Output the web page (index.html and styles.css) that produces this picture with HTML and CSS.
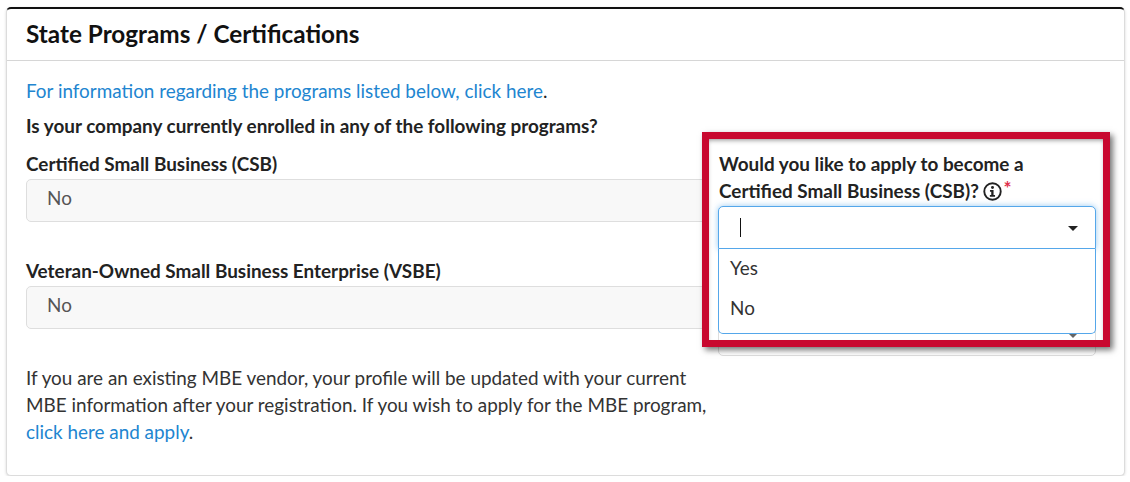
FILE: index.html
```html
<!DOCTYPE html>
<html lang="en">
<head>
<meta charset="utf-8">
<title>State Programs / Certifications</title>
<link rel="stylesheet" href="styles.css">
</head>
<body>
<section class="card">
  <h2 class="card-title">State Programs / Certifications</h2>
  <div class="card-body">
    <p class="intro"><a href="#">For information regarding the programs listed below, click here</a>.</p>
    <p class="question">Is your company currently enrolled in any of the following programs?</p>
    <div class="columns">
      <div class="left">
        <label class="label">Certified Small Business (CSB)</label>
        <div class="readonly">No</div>
        <label class="label label-second">Veteran-Owned Small Business Enterprise (VSBE)</label>
        <div class="readonly readonly-second">No</div>
        <p class="note">If you are an existing MBE vendor, your profile will be updated with your current MBE information after your registration. If you wish to apply for the MBE program, <a href="#">click here and apply</a>.</p>
      </div>
      <div class="right">
        <label class="label">Would you like to apply to become a<br>Certified Small Business (CSB)? <svg class="info" width="19" height="19" viewBox="0 0 18 18" aria-hidden="true"><circle cx="9" cy="9" r="7.8" fill="none" stroke="#222" stroke-width="1.8"/><circle cx="9" cy="5.3" r="1.4" fill="#222"/><path d="M6.6 7.6h3.4v4.7h1.4v1.6H6.5v-1.6h1.3V9.2H6.6z" fill="#222"/></svg><span class="req">*</span></label>
        <div class="select-wrap">
          <div class="select select-open"><span class="cursor"></span><span class="caret"></span></div>
          <ul class="menu">
            <li>Yes</li>
            <li>No</li>
          </ul>
        </div>
        <div class="select select-second"><span class="caret caret-muted"></span></div>
      </div>
    </div>
  </div>
  <div class="highlight"></div>
</section>
</body>
</html>
```
FILE: styles.css
```css
* { box-sizing: border-box; }
html, body { margin: 0; background: #fff; }
body {
  padding: 7px 5px 0 6px;
  font-family: Lato, "Liberation Sans", sans-serif;
  font-size: 18.9px;
  line-height: 26.5px;
  color: #222;
}
a { color: #2185d0; text-decoration: none; }
p { margin: 0; }
.card {
  position: relative;
  height: 469px;
  background: #fff;
  border: 1px solid #dcdcdc;
  border-top: 2px solid #111;
  border-radius: 5px;
  box-shadow: 0 1px 3px rgba(0,0,0,.16);
}
.card-title {
  margin: 0;
  height: 52px;
  padding: 0 19px;
  font-size: 24.3px;
  line-height: 49px;
  font-weight: 700;
  color: #111;
  border-bottom: 1px solid #d6d6d6;
}
.card-body { padding: 17px 19px 0; }
.question { margin-top: 8px; font-weight: 700; }
.columns {
  display: grid;
  grid-template-columns: 682px 378px;
  column-gap: 10px;
  margin-top: 12px;
}
.label { display: block; font-weight: 700; }
.right .label { padding-left: 1px; }
.label-second { margin-top: 36px; }
.readonly {
  height: 43px;
  margin-top: 1px;
  padding: 0 20px;
  line-height: 36px;
  color: #555;
  background: #f8f8f8;
  border: 1px solid #dedede;
  border-radius: 5px;
}
.readonly-second { margin-top: 2px; }
.note { margin-top: 36.4px; line-height: 26.6px; color: #333; }
.info { vertical-align: -3px; }
.req { display: inline-block; height: 20px; margin-left: 1px; line-height: 20px; color: #e0314b; vertical-align: 3px; font-weight: 700; }
.select-wrap { position: relative; margin-top: 2px; }
.select {
  position: relative;
  height: 43px;
  background: #fff;
  border: 1px solid #dedede;
  border-radius: 5px;
}
.select-open {
  border-color: #55a7ea;
  border-radius: 5px 5px 0 0;
  box-shadow: 0 0 6px rgba(85,167,234,.6);
}
.select-second { margin-top: 64px; }
.cursor {
  position: absolute;
  left: 21px;
  top: 11px;
  width: 1px;
  height: 19px;
  background: #111;
}
.caret {
  position: absolute;
  right: 17px;
  top: 19px;
  border-style: solid;
  border-width: 5px 5px 0;
  border-color: #222 transparent transparent;
}
.caret-muted { border-top-color: #666; }
.menu {
  position: absolute;
  z-index: 1;
  top: 43px;
  left: 0;
  right: 0;
  margin: 0;
  padding: 0 0 4px;
  list-style: none;
  background: #fff;
  border: 1px solid #55a7ea;
  border-top: 0;
  border-radius: 0 0 5px 5px;
  color: #333;
}
.menu li { height: 40px; padding: 0 11px; line-height: 38px; }
.highlight {
  position: absolute;
  z-index: 2;
  left: 695px;
  top: 123px;
  width: 408px;
  height: 215px;
  border: 7px solid #c8082f;
  box-shadow: 3px 3px 6px rgba(0,0,0,.55), inset 0 3px 5px -2px rgba(0,0,0,.45);
}
```
